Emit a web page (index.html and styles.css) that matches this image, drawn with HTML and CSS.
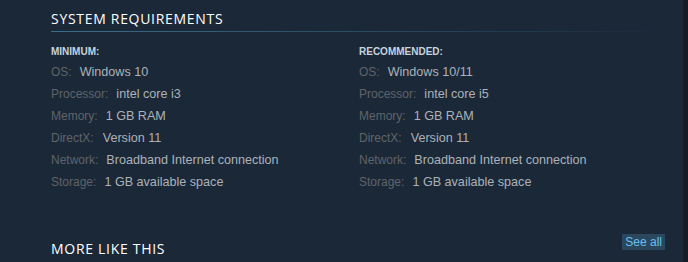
FILE: index.html
```html
<!DOCTYPE html>
<html>
<head>
<meta charset="utf-8">
<link rel="stylesheet" href="styles.css">
</head>
<body>
<div class="page">
  <div class="main">
    <div class="content">
      <h2 class="heading">System Requirements</h2>
      <div class="sysreq">
        <div class="col">
          <div class="col-title">Minimum:</div>
          <ul class="reqs">
            <li><span class="lbl">OS:</span><span class="val">Windows 10</span></li>
            <li><span class="lbl">Processor:</span><span class="val">intel core i3</span></li>
            <li><span class="lbl">Memory:</span><span class="val">1 GB RAM</span></li>
            <li><span class="lbl">DirectX:</span><span class="val val-dx">Version 11</span></li>
            <li><span class="lbl">Network:</span><span class="val">Broadband Internet connection</span></li>
            <li><span class="lbl">Storage:</span><span class="val">1 GB available space</span></li>
          </ul>
        </div>
        <div class="col">
          <div class="col-title">Recommended:</div>
          <ul class="reqs">
            <li><span class="lbl">OS:</span><span class="val">Windows 10/11</span></li>
            <li><span class="lbl">Processor:</span><span class="val">intel core i5</span></li>
            <li><span class="lbl">Memory:</span><span class="val">1 GB RAM</span></li>
            <li><span class="lbl">DirectX:</span><span class="val val-dx">Version 11</span></li>
            <li><span class="lbl">Network:</span><span class="val">Broadband Internet connection</span></li>
            <li><span class="lbl">Storage:</span><span class="val">1 GB available space</span></li>
          </ul>
        </div>
      </div>
      <div class="more-row">
        <h2 class="heading heading-plain">More Like This</h2>
        <a class="see-all" href="#">See all</a>
      </div>
    </div>
  </div>
  <div class="strip"></div>
</div>
</body>
</html>
```

FILE: styles.css
```css
html, body {
  margin: 0;
  padding: 0;
  background: #1b2838;
}
.page {
  display: flex;
  width: 688px;
  height: 262px;
  overflow: hidden;
}
.main {
  flex: 0 0 683px;
  background: #1b2838;
}
.strip {
  flex: 1;
  background: #171d25;
}
.content {
  width: 616px;
  margin-left: 51px;
  padding-top: 9px;
}
.heading {
  margin: 0;
  font-family: "Open Sans", "Noto Sans", sans-serif;
  font-weight: 400;
  font-size: 14px;
  line-height: 20px;
  letter-spacing: 0.7px;
  text-transform: uppercase;
  color: #ffffff;
  padding-bottom: 3px;
  background: linear-gradient(to right, #3b6e8c 0%, rgba(59, 110, 140, 0) 100%) no-repeat left bottom / 100% 1px;
}
.heading-plain {
  background: none;
  padding-bottom: 0;
}
.sysreq {
  display: flex;
  margin-top: 13px;
}
.col {
  flex: 0 0 308px;
}
.col-title {
  font-family: "Liberation Sans", Arial, sans-serif;
  font-weight: 700;
  font-size: 10px;
  line-height: 14px;
  text-transform: uppercase;
  color: #c6d4df;
}
.reqs {
  list-style: none;
  margin: 2px 0 0;
  padding: 0;
}
.reqs li {
  display: flex;
  align-items: baseline;
  height: 22px;
  font-family: "Liberation Sans", Arial, sans-serif;
  line-height: 22px;
  white-space: nowrap;
}
.lbl {
  font-size: 12px;
  color: #5f6469;
  margin-right: 8px;
}
.val {
  font-size: 12.6px;
  color: #acb2b8;
}
.val-dx {
  margin-left: 1px;
}
.more-row {
  display: flex;
  justify-content: space-between;
  align-items: flex-start;
  margin-top: 41px;
  margin-right: 2px;
}
.more-row .heading {
  margin-top: 5px;
}
.see-all {
  font-family: "Liberation Sans", Arial, sans-serif;
  font-size: 12px;
  line-height: 16px;
  padding: 0 3px;
  background: #2a475e;
  color: #66c0f4;
  text-decoration: none;
}
```
